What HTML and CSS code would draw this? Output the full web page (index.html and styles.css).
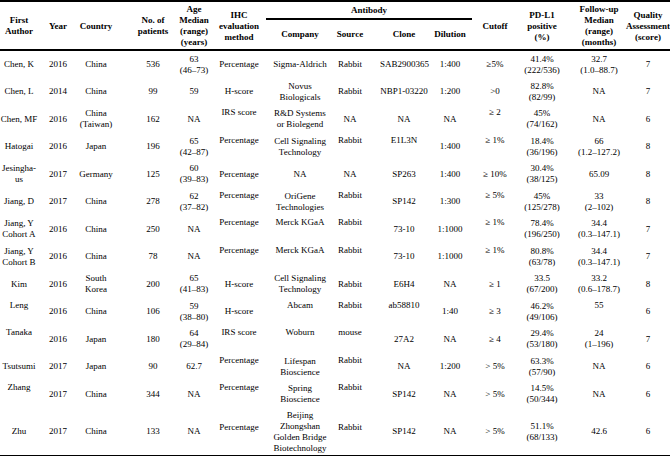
FILE: index.html
```html
<!DOCTYPE html>
<html>
<head>
<meta charset="utf-8">
<link rel="stylesheet" href="styles.css">
</head>
<body>
<table class="tbl">
<colgroup>
<col class="c-author"><col class="c-year"><col class="c-country"><col class="c-pat"><col class="c-age"><col class="c-ihc"><col class="c-comp"><col class="c-src"><col class="c-clone"><col class="c-dil"><col class="c-cut"><col class="c-pd"><col class="c-fu"><col class="c-q">
</colgroup>
<thead>
<tr class="h1">
<th rowspan="2">First<br>Author</th>
<th rowspan="2">Year</th>
<th rowspan="2">Country</th>
<th rowspan="2" class="pat">No. of<br>patients</th>
<th rowspan="2">Age<br>Median<br>(range)<br>(years)</th>
<th rowspan="2">IHC<br>evaluation<br>method</th>
<th colspan="4" class="ab">Antibody</th>
<th rowspan="2">Cutoff</th>
<th rowspan="2">PD-L1<br>positive<br>(%)</th>
<th rowspan="2" class="fu">Follow-up<br>Median<br>(range)<br>(months)</th>
<th rowspan="2">Quality<br>Assessment<br>(score)</th>
</tr>
<tr class="h2"><th>Company</th><th>Source</th><th class="clone">Clone</th><th>Dilution</th></tr>
</thead>
<tbody>
<tr class="r"><td>Chen, K</td><td>2016</td><td>China</td><td>536</td><td>63<br>(46–73)</td><td>Percentage</td><td>Sigma-Aldrich</td><td>Rabbit</td><td>SAB2900365</td><td>1:400</td><td>≥5%</td><td>41.4%<br>(222/536)</td><td>32.7<br>(1.0–88.7)</td><td>7</td></tr>
<tr class="r"><td>Chen, L</td><td>2014</td><td>China</td><td>99</td><td>59</td><td>H-score</td><td>Novus<br>Biologicals</td><td>Rabbit</td><td>NBP1-03220</td><td>1:200</td><td>&gt;0</td><td>82.8%<br>(82/99)</td><td>NA</td><td>7</td></tr>
<tr class="r"><td>Chen, MF</td><td>2016</td><td>China<br>(Taiwan)</td><td>162</td><td>NA</td><td class="t">IRS score</td><td>R&amp;D Systems<br>or Biolegend</td><td>NA</td><td>NA</td><td>NA</td><td class="t">≥ 2</td><td>45%<br>(74/162)</td><td>NA</td><td>6</td></tr>
<tr class="r"><td>Hatogai</td><td>2016</td><td>Japan</td><td>196</td><td>65<br>(42–87)</td><td class="t">Percentage</td><td>Cell Signaling<br>Technology</td><td class="t">Rabbit</td><td class="t">E1L3N</td><td>1:400</td><td class="t">≥ 1%</td><td>18.4%<br>(36/196)</td><td>66<br>(1.2–127.2)</td><td>8</td></tr>
<tr class="r"><td>Jesingha-<br>us</td><td>2017</td><td>Germany</td><td>125</td><td>60<br>(39–83)</td><td>Percentage</td><td>NA</td><td>NA</td><td>SP263</td><td>1:400</td><td>≥ 10%</td><td>30.4%<br>(38/125)</td><td>65.09</td><td>8</td></tr>
<tr class="r"><td>Jiang, D</td><td>2017</td><td>China</td><td>278</td><td>62<br>(37–82)</td><td class="t">Percentage</td><td>OriGene<br>Technologies</td><td class="t">Rabbit</td><td>SP142</td><td>1:300</td><td class="t">≥ 5%</td><td>45%<br>(125/278)</td><td>33<br>(2–102)</td><td>8</td></tr>
<tr class="r"><td>Jiang, Y<br>Cohort A</td><td>2016</td><td>China</td><td>250</td><td>NA</td><td class="t">Percentage</td><td class="t">Merck KGaA</td><td class="t">Rabbit</td><td>73-10</td><td>1:1000</td><td class="t">≥ 1%</td><td>78.4%<br>(196/250)</td><td>34.4<br>(0.3–147.1)</td><td>7</td></tr>
<tr class="r"><td>Jiang, Y<br>Cohort B</td><td>2016</td><td>China</td><td>78</td><td>NA</td><td class="t">Percentage</td><td class="t">Merck KGaA</td><td class="t">Rabbit</td><td>73-10</td><td>1:1000</td><td class="t">≥ 1%</td><td>80.8%<br>(63/78)</td><td>34.4<br>(0.3–147.1)</td><td>7</td></tr>
<tr class="r"><td>Kim</td><td>2016</td><td>South<br>Korea</td><td>200</td><td>65<br>(41–83)</td><td>H-score</td><td>Cell Signaling<br>Technology</td><td>Rabbit</td><td>E6H4</td><td>NA</td><td>≥ 1</td><td>33.5<br>(67/200)</td><td>33.2<br>(0.6–178.7)</td><td>8</td></tr>
<tr class="r"><td class="t">Leng</td><td>2016</td><td>China</td><td>106</td><td>59<br>(38–80)</td><td>H-score</td><td class="t">Abcam</td><td class="t">Rabbit</td><td class="t">ab58810</td><td>1:40</td><td>≥ 3</td><td>46.2%<br>(49/106)</td><td class="t">55</td><td>6</td></tr>
<tr class="r"><td class="t">Tanaka</td><td>2016</td><td>Japan</td><td>180</td><td>64<br>(29–84)</td><td class="t">IRS score</td><td class="t">Woburn</td><td class="t">mouse</td><td>27A2</td><td>NA</td><td>≥ 4</td><td>29.4%<br>(53/180)</td><td>24<br>(1–196)</td><td>7</td></tr>
<tr class="r"><td>Tsutsumi</td><td>2017</td><td>Japan</td><td>90</td><td>62.7</td><td class="t">Percentage</td><td>Lifespan<br>Bioscience</td><td class="t">Rabbit</td><td>NA</td><td>1:200</td><td>&gt; 5%</td><td>63.3%<br>(57/90)</td><td>NA</td><td>6</td></tr>
<tr class="r"><td class="t">Zhang</td><td>2017</td><td>China</td><td>344</td><td>NA</td><td class="t">Percentage</td><td>Spring<br>Bioscience</td><td class="t">Rabbit</td><td>SP142</td><td>NA</td><td>&gt; 5%</td><td>14.5%<br>(50/344)</td><td>NA</td><td>6</td></tr>
<tr class="last"><td>Zhu</td><td>2017</td><td>China</td><td>133</td><td>NA</td><td class="up">Percentage</td><td>Beijing<br>Zhongshan<br>Golden Bridge<br>Biotechnology</td><td class="up">Rabbit</td><td>SP142</td><td>NA</td><td>&gt; 5%</td><td>51.1%<br>(68/133)</td><td>42.6</td><td>6</td></tr>
</tbody>
</table>
</body>
</html>
```
FILE: styles.css
```css
html, body {
  margin: 0;
  padding: 0;
  background: #ffffff;
}

.tbl {
  width: 670px;
  border-collapse: collapse;
  table-layout: fixed;
  font-family: "Liberation Serif", "Times New Roman", serif;
  font-size: 9px;
  line-height: 11px;
  color: #000;
  border-top: 2px solid #000;
  border-bottom: 2px solid #000;
}

.c-author { width: 38px; }
.c-year { width: 40px; }
.c-country { width: 36px; }
.c-pat { width: 62px; }
.c-age { width: 36px; }
.c-ihc { width: 54px; }
.c-comp { width: 68px; }
.c-src { width: 32px; }
.c-clone { width: 62px; }
.c-dil { width: 44px; }
.c-cut { width: 46px; }
.c-pd { width: 48px; }
.c-fu { width: 60px; }
.c-q { width: 44px; }

.tbl th,
.tbl td {
  padding: 2px 0 1px;
  text-align: center;
  vertical-align: middle;
  white-space: nowrap;
}

.tbl th {
  font-weight: bold;
}

/* shifted column centres */
.tbl th.pat,
.tbl tbody td:nth-child(4) {
  padding-left: 16px;
}

.tbl th.clone,
.tbl tbody td:nth-child(9) {
  padding-left: 14px;
}

.tbl th.fu,
.tbl tbody td:nth-child(13) {
  padding-left: 6px;
}

.tbl thead {
  border-bottom: 2px solid #000;
}

.h1 { height: 16px; }
.h2 { height: 30px; }

.tbl th.ab {
  vertical-align: top;
  padding-top: 3px;
  border-bottom: 2px solid #000;
}

.r { height: 27.5px; }

.tbl td.t {
  vertical-align: top;
}

.tbl td.up {
  padding-bottom: 10px;
}
```
